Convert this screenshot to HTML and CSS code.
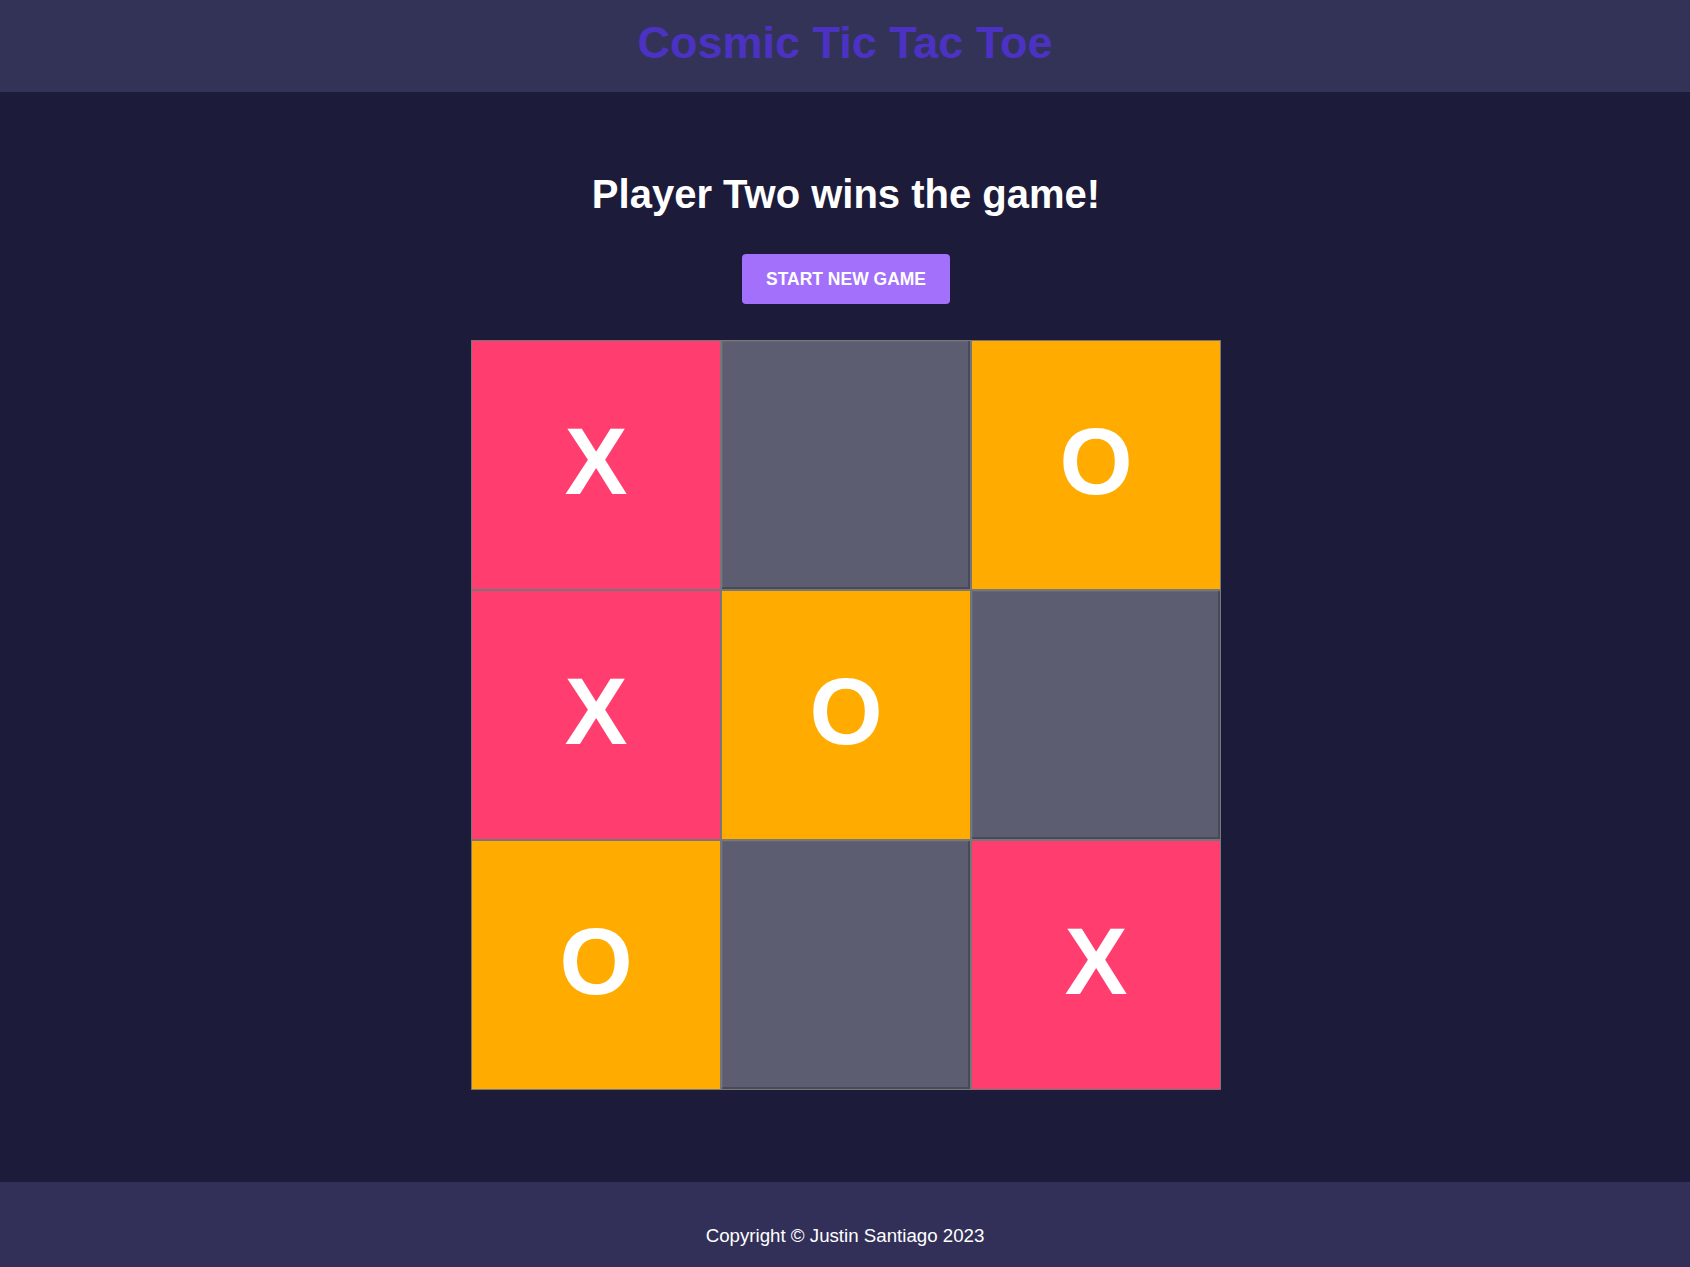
FILE: index.html
```html
<!DOCTYPE html>
<html lang="en">
<head>
<meta charset="utf-8">
<title>Cosmic Tic Tac Toe</title>
<link rel="stylesheet" href="styles.css">
</head>
<body>
  <header class="site-header">
    <h1 class="site-title">Cosmic Tic Tac Toe</h1>
  </header>
  <main class="game">
    <h2 class="status">Player Two wins the game!</h2>
    <button class="new-game" type="button">START NEW GAME</button>
    <div class="board">
      <div class="cell cell-x">X</div>
      <div class="cell cell-empty"></div>
      <div class="cell cell-o">O</div>
      <div class="cell cell-x">X</div>
      <div class="cell cell-o">O</div>
      <div class="cell cell-empty"></div>
      <div class="cell cell-o">O</div>
      <div class="cell cell-empty"></div>
      <div class="cell cell-x">X</div>
    </div>
  </main>
  <footer class="site-footer">
    <p class="copyright">Copyright © Justin Santiago 2023</p>
  </footer>
</body>
</html>
```
FILE: styles.css
```css
* {
  box-sizing: border-box;
}

html, body {
  margin: 0;
  padding: 0;
}

body {
  background: #1c1b3a;
  font-family: "Liberation Sans", Arial, sans-serif;
  color: #ffffff;
}

.site-header {
  background: #333358;
  height: 92px;
  padding-top: 17px;
  text-align: center;
}

.site-title {
  margin: 0;
  font-size: 45px;
  line-height: 52px;
  font-weight: 700;
  color: #4b32c3;
}

.game {
  display: flex;
  flex-direction: column;
  align-items: center;
  padding-top: 80px;
  padding-bottom: 92px;
  padding-left: 2px;
}

.status {
  margin: 0 0 37px;
  font-size: 40px;
  line-height: 45px;
  font-weight: 700;
  color: #ffffff;
}

.new-game {
  width: 208px;
  height: 50px;
  margin: 0 0 36px;
  padding: 0;
  border: none;
  border-radius: 4px;
  background: #a370fc;
  color: #ffffff;
  font-family: "Liberation Sans", Arial, sans-serif;
  font-size: 17.5px;
  font-weight: 700;
  cursor: pointer;
}

.board {
  display: grid;
  grid-template-columns: repeat(3, 250px);
  grid-template-rows: repeat(3, 250px);
}

.cell {
  display: flex;
  align-items: center;
  justify-content: center;
  padding-bottom: 6px;
  border: 1px solid #777777;
  font-size: 94px;
  font-weight: 700;
  line-height: 1;
  color: #ffffff;
}

.cell-x {
  background: #ff3d6f;
}

.cell-o {
  background: #ffab00;
}

.cell-empty {
  background: #5c5d70;
  box-shadow: inset -2px -2px 0 rgba(0, 0, 0, 0.2), inset 1px 1px 0 rgba(255, 255, 255, 0.05);
}

.site-footer {
  background: #323058;
  padding: 43px 0 43px;
  text-align: center;
}

.copyright {
  margin: 0;
  font-size: 18.7px;
  line-height: 21.5px;
  color: #ffffff;
}
```
